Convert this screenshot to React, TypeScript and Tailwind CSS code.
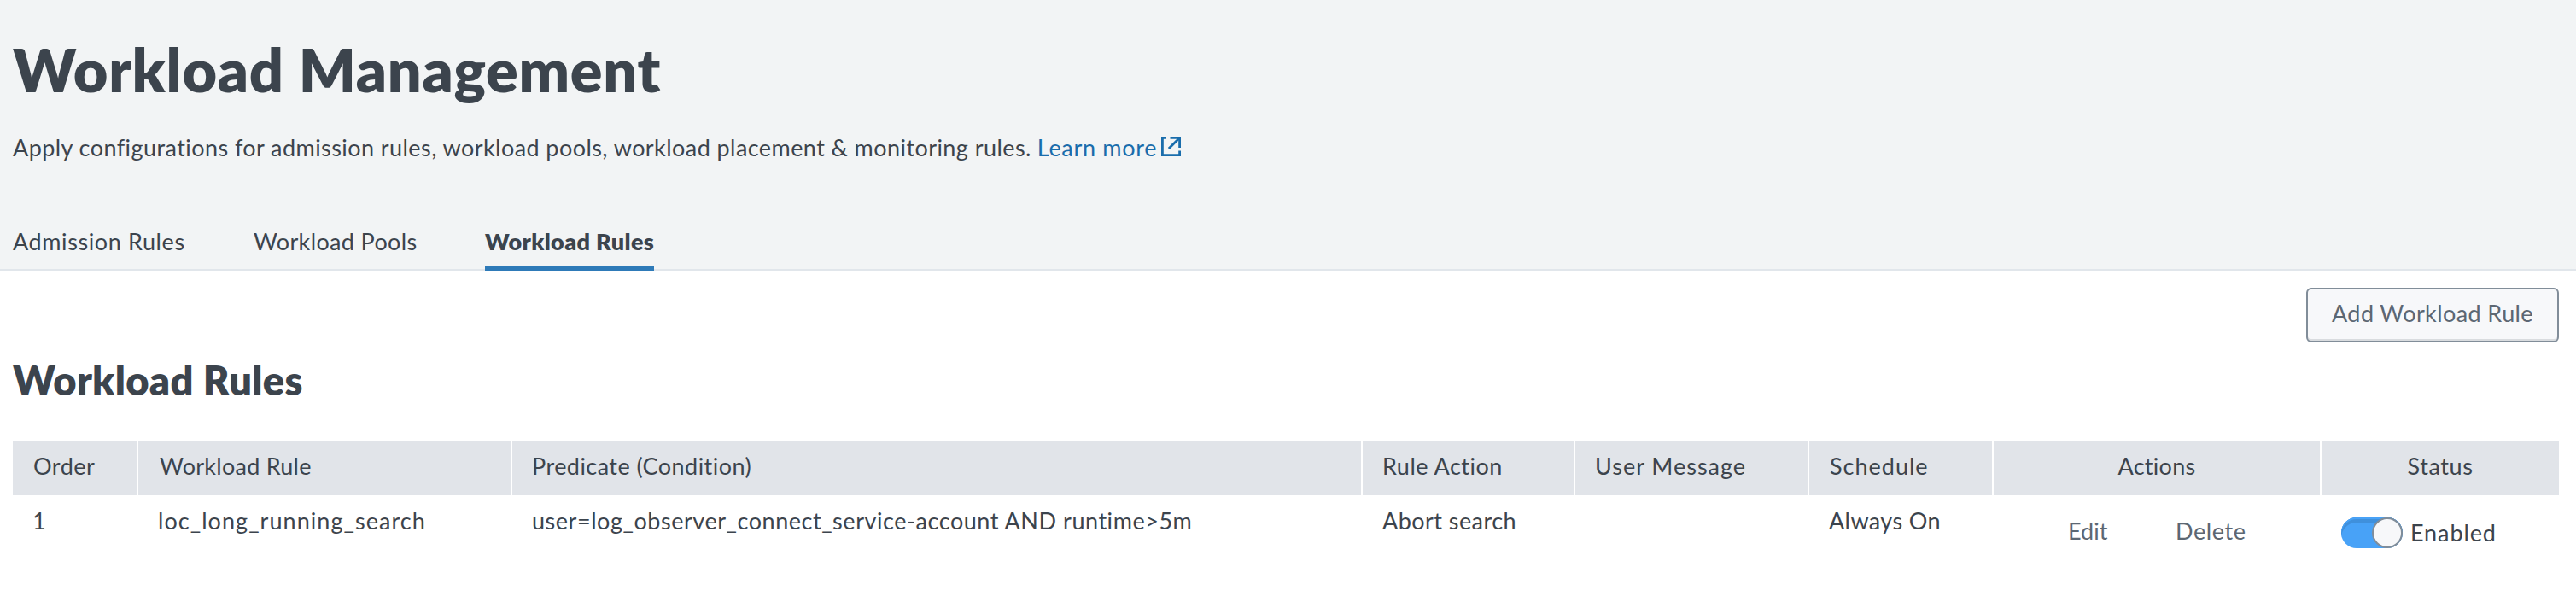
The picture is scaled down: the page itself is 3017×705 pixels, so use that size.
import { useState } from "react";

const columns = [
  { label: "Order", head: "pl-[24px] tracking-[0.5px]" },
  { label: "Workload Rule", head: "pl-[25px] tracking-[0.25px]" },
  { label: "Predicate (Condition)", head: "pl-[23px] tracking-[0.45px]" },
  { label: "Rule Action", head: "pl-[23px] tracking-[0.5px]" },
  { label: "User Message", head: "pl-[23px] tracking-[1px]" },
  { label: "Schedule", head: "pl-[24px] tracking-[1px]" },
  { label: "Actions", head: "text-center tracking-[0.3px]" },
  { label: "Status", head: "text-center tracking-[0.6px]" },
];

const grid =
  "grid grid-cols-[145px_436px_994px_247px_272px_214px_382px_278px] gap-x-[2px]";

function ExternalIcon() {
  return (
    <svg
      className="ml-[5px] mt-[7px] h-[23px] w-[23px]"
      viewBox="0 0 23 23"
      fill="none"
      stroke="currentColor"
      strokeWidth="2.8"
    >
      <path d="M6 1.4H1.4V21.6H21.6V16.5" />
      <path d="M10.5 1.4H21.6V13" />
      <path d="M21 2L8.8 14" />
    </svg>
  );
}

function Toggle({ on, onChange }: { on: boolean; onChange: () => void }) {
  return (
    <button
      role="switch"
      aria-checked={on}
      onClick={onChange}
      className={
        on
          ? "flex h-[36px] w-[72px] justify-end rounded-full bg-[#48a2f7] shadow-[inset_0_2px_0_#48a2f7,inset_0_6px_0_#3f90dc]"
          : "flex h-[36px] w-[72px] justify-start rounded-full bg-[#c3cbd4]"
      }
    >
      <span className="h-[36px] w-[36px] rounded-full border-2 border-[#818d99] bg-[#f7f8fa]" />
    </button>
  );
}

export default function App() {
  const [enabled, setEnabled] = useState(true);
  return (
    <div className="h-[705px] w-[3017px] overflow-hidden bg-white font-['Lato',sans-serif] text-[27px] leading-[36px] text-[#3c444d]">
      <header className="flex h-[317px] flex-col border-b-2 border-[#e1e6eb] bg-[#f2f4f5] pl-[15px] pt-[41px]">
        <h1 className="text-[70px] leading-[80px] font-extrabold tracking-[0.75px]">Workload Management</h1>
        <div className="mt-[32px] flex leading-[40px]">
          <p className="tracking-[0.43px]">
            Apply configurations for admission rules, workload pools, workload placement &amp; monitoring rules.
          </p>
          <a className="ml-[7px] flex text-[#1a6dac]">
            <span className="tracking-[0.7px]">Learn more</span>
            <ExternalIcon />
          </a>
        </div>
        <nav className="mt-[72px] flex h-[52px] shrink-0">
          <a className="w-[282px] tracking-[0.6px]">Admission Rules</a>
          <a className="w-[271px] tracking-[0.35px]">Workload Pools</a>
          <a className="w-[198px] border-b-6 border-[#2e7ab8] font-extrabold tracking-[0.4px] whitespace-nowrap">
            Workload Rules
          </a>
        </nav>
      </header>
      <main className="flex flex-col pl-[15px] pr-[20px] pt-[20px]">
        <button className="flex h-[64px] w-[296px] justify-center self-end rounded-[6px] border-2 border-[#818d99] bg-[#f7f8fa] pt-[10px] tracking-[0.4px] text-[#5c6773] shadow-[inset_0_-2px_0_#d9dcdf]">
          Add Workload Rule
        </button>
        <h2 className="mt-[16px] text-[47px] leading-[56px] font-extrabold tracking-[0.3px]">Workload Rules</h2>
        <div className="mt-[43px]">
          <div className={grid}>
            {columns.map((c) => (
              <div key={c.label} className={"h-[64px] bg-[#e1e4e9] pt-[12px] " + c.head}>
                {c.label}
              </div>
            ))}
          </div>
          <div className={grid}>
            <div className="pl-[23px] pt-[12px]">1</div>
            <div className="pl-[23px] pt-[12px] tracking-[1.05px]">loc_long_running_search</div>
            <div className="pl-[23px] pt-[12px] tracking-[0.54px]">
              user=log_observer_connect_service-account AND runtime&gt;5m
            </div>
            <div className="pl-[23px] pt-[12px] tracking-[0.45px]">Abort search</div>
            <div />
            <div className="pl-[23px] pt-[12px] tracking-[0.4px]">Always On</div>
            <div className="flex pl-[87px] pt-[24px] text-[#5c6773]">
              <a className="w-[126px]">Edit</a>
              <a className="tracking-[0.6px]">Delete</a>
            </div>
            <div className="flex pl-[23px] pt-[26px]">
              <Toggle on={enabled} onChange={() => setEnabled(!enabled)} />
              <span className="ml-[9px] tracking-[0.9px]">Enabled</span>
            </div>
          </div>
        </div>
      </main>
    </div>
  );
}
